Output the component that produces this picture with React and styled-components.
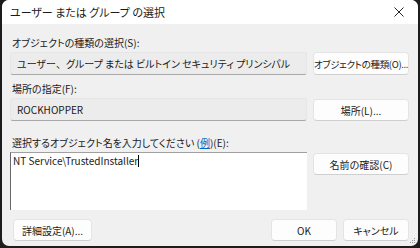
import React from "react";
import styled, { createGlobalStyle } from "styled-components";

const Global = createGlobalStyle`
  html, body { margin: 0; padding: 0; background: #1c1c1c; }
  body { width: 420px; height: 248px; overflow: hidden; }
  * { box-sizing: border-box; }
`;

const font = `"Noto Sans CJK JP", "Noto Sans", sans-serif`;

const Window = styled.div`
  position: relative;
  margin: 0 2px 0 2px;
  width: 416px;
  height: 246px;
  background: #f0f0f0;
  border-radius: 7px;
  overflow: hidden;
  font-family: ${font};
  font-feature-settings: "palt";
  color: #1a1a1a;
  display: flex;
  flex-direction: column;
`;

const TitleBar = styled.div`
  height: 24px;
  background: #ffffff;
  display: flex;
  align-items: center;
  justify-content: space-between;
  padding: 0 14px 0 8px;
  font-size: 11px;
  flex: none;
`;

const Body = styled.div`
  padding: 12px 9px 7px 8px;
  display: flex;
  flex-direction: column;
  flex: 1;
`;

const Grid = styled.div`
  display: grid;
  grid-template-columns: 297px 96px;
  column-gap: 6px;
`;

const Label = styled.div`
  grid-column: 1 / 3;
  font-size: 10px;
  line-height: 14px;
  height: 14px;
  padding-left: 2px;
  margin-top: ${(p) => p.$mt || 0}px;
  margin-bottom: ${(p) => p.$mb || 2}px;
  white-space: nowrap;
`;

const Field = styled.div`
  height: 23px;
  background: #ececec;
  border: 1px solid #e6e6e6;
  border-bottom-color: #a8a8a8;
  border-radius: 3px;
  font-size: 10px;
  display: flex;
  align-items: center;
  padding-left: 6px;
  white-space: nowrap;
`;

const Comma = styled.span`
  font-feature-settings: normal;
`;

const Button = styled.div`
  height: ${(p) => p.$h || 23}px;
  width: ${(p) => (p.$w ? p.$w + "px" : "auto")};
  align-self: start;
  margin-top: ${(p) => p.$mt || 0}px;
  background: #fdfdfd;
  border: 1px solid #e4e4e4;
  border-bottom-color: #cfcfcf;
  border-radius: 4px;
  font-size: ${(p) => (p.$tight ? "9.5px" : "10px")};
  letter-spacing: ${(p) => (p.$tight ? "-0.35px" : "0")};
  display: flex;
  align-items: center;
  justify-content: center;
  white-space: nowrap;
  overflow: hidden;
`;

const TextArea = styled.div`
  height: 58px;
  background: #ffffff;
  border-top: 1px solid #a0a0a0;
  border-left: 1px solid #6a6a6a;
  font-size: 10px;
  line-height: 14px;
  padding: 1px 0 0 2px;
  white-space: nowrap;
`;

const Caret = styled.span`
  display: inline-block;
  width: 1px;
  height: 12px;
  background: #000;
  vertical-align: -2px;
`;

const Link = styled.span`
  color: #0a64c8;
  text-decoration: underline;
`;

const Footer = styled.div`
  display: flex;
  align-items: center;
  margin-top: 9px;
  padding-left: 3px;
  gap: 6px;
`;

const Spacer = styled.div`
  flex: 1;
`;

const Grip = styled.svg`
  position: absolute;
  right: 2px;
  bottom: 2px;
`;

export default function App() {
  return (
    <>
      <Global />
      <Window>
        <TitleBar>
          <span>ユーザー または グループ の選択</span>
          <svg width="10" height="10" viewBox="0 0 10 10">
            <path d="M0.5 0.5 L9.5 9.5 M9.5 0.5 L0.5 9.5" stroke="#222" strokeWidth="1" />
          </svg>
        </TitleBar>
        <Body>
          <Grid>
            <Label>オブジェクトの種類の選択(S):</Label>
            <Field>
              ユーザー<Comma>、</Comma>グループ または ビルトイン セキュリティ プリンシパル
            </Field>
            <Button $tight>オブジェクトの種類(O)...</Button>
            <Label $mt={7}>場所の指定(F):</Label>
            <Field>ROCKHOPPER</Field>
            <Button $h={22} $mt={1}>場所(L)...</Button>
            <Label $mt={15} $mb={0}>
              選択するオブジェクト名を入力してください (<Link>例</Link>)(E):
            </Label>
            <TextArea>
              NT Service\TrustedInstaller<Caret />
            </TextArea>
            <Button $h={22} $mt={1}>名前の確認(C)</Button>
          </Grid>
          <Footer>
            <Button $w={79} $h={22}>詳細設定(A)...</Button>
            <Spacer />
            <Button $w={66} $h={22}>OK</Button>
            <Button $w={66} $h={22}>キャンセル</Button>
          </Footer>
        </Body>
        <Grip width="6" height="6" viewBox="0 0 6 6">
          <rect x="4" y="0" width="1" height="1" fill="#999" />
          <rect x="2" y="2" width="1" height="1" fill="#999" />
          <rect x="4" y="2" width="1" height="1" fill="#999" />
          <rect x="0" y="4" width="1" height="1" fill="#999" />
          <rect x="2" y="4" width="1" height="1" fill="#999" />
          <rect x="4" y="4" width="1" height="1" fill="#999" />
        </Grip>
      </Window>
    </>
  );
}
